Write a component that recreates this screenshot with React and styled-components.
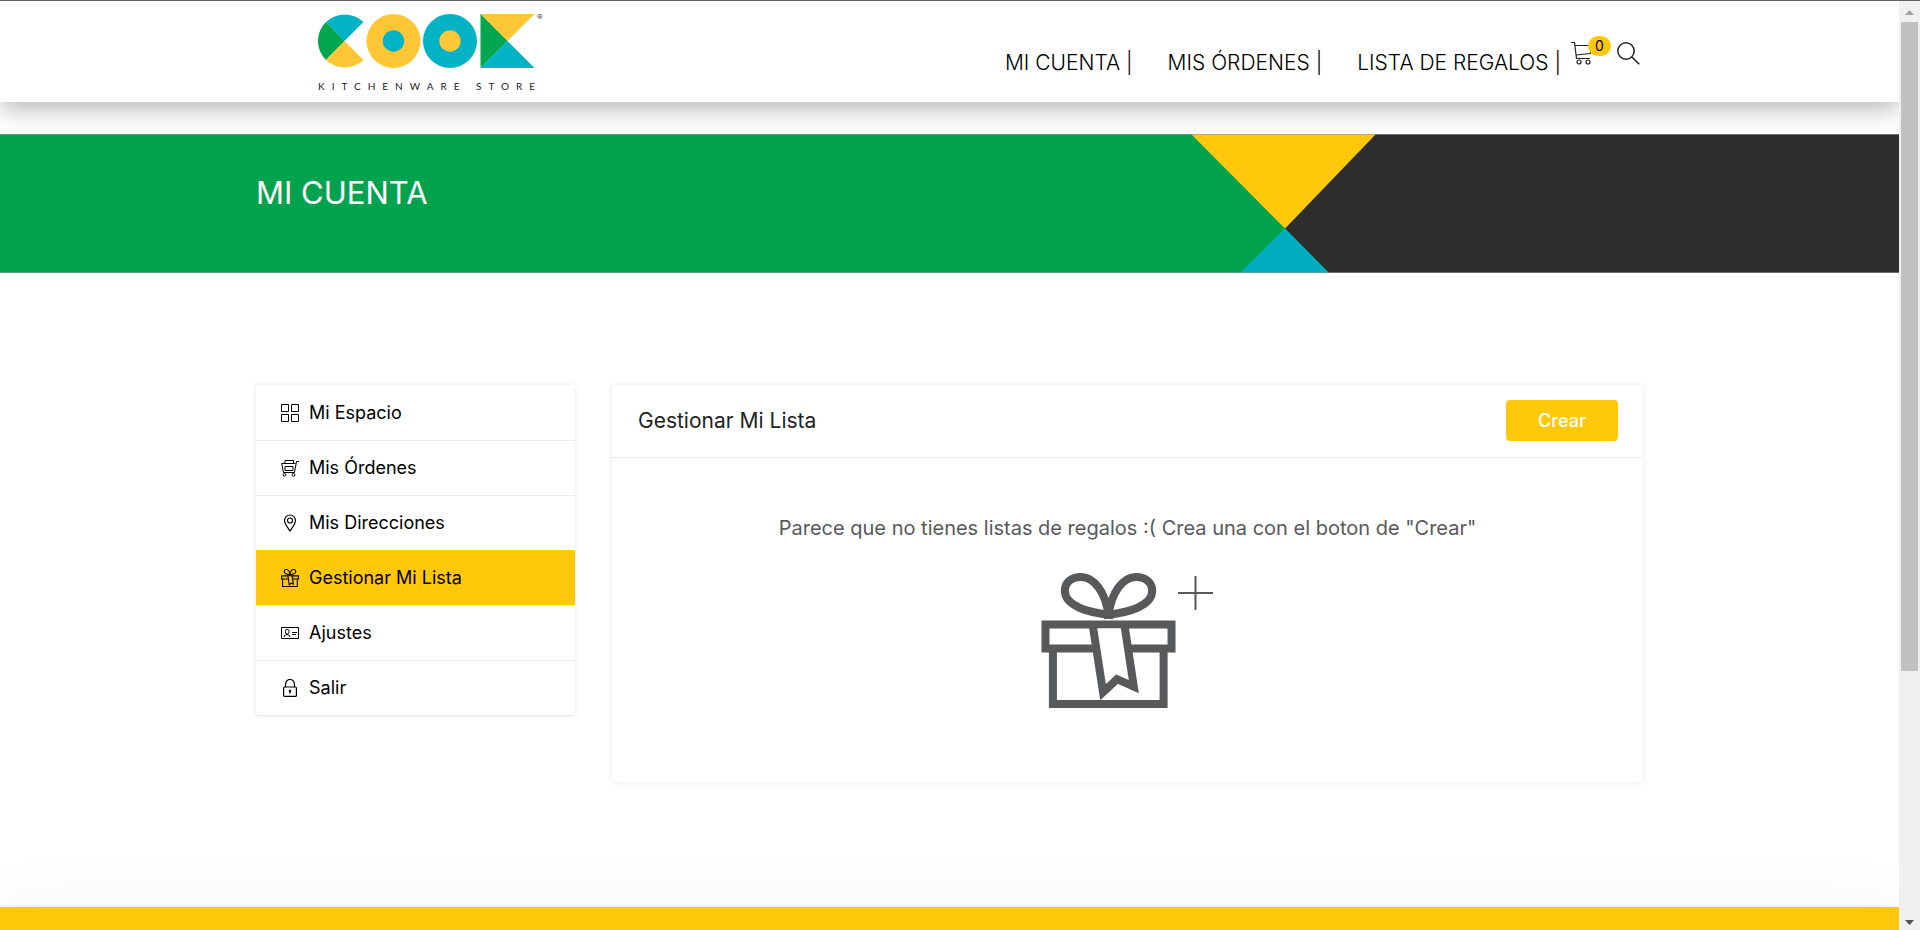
import React from "react";
import styled, { createGlobalStyle, css } from "styled-components";

const YELLOW = "#ffc80a";
const GREEN = "#02a24f";
const CYAN = "#02adc2";
const DARK = "#2d2d2d";

const GlobalStyle = createGlobalStyle`
  *, *::before, *::after { box-sizing: border-box; }
  body {
    margin: 0;
    background: #fff;
    color: #000;
    font-family: Inter, "Open Sans", sans-serif;
    font-size: 18px;
  }
  a { color: inherit; text-decoration: none; }
  h1, h2, p, ul { margin: 0; padding: 0; font-weight: 400; }
  ul { list-style: none; }
  svg { display: block; flex: none; }
`;

const Shell = styled.div`
  display: flex;
  min-height: 100vh;
  border-top: 1px solid #5f5d66;
`;

const Page = styled.div`
  flex: 1;
  min-width: 0;
  display: flex;
  flex-direction: column;
  overflow: hidden;
`;

const Container = styled.div`
  width: 100%;
  max-width: 1387px;
  margin: 0 auto;
`;

const Header = styled.header`
  height: 101px;
  background: #fff;
  box-shadow: 0 6px 24px rgba(0, 0, 0, 0.3);
`;

const HeaderRow = styled(Container)`
  display: flex;
  justify-content: space-between;
  padding: 8px 3px 0 62px;
`;

const Nav = styled.nav`
  display: flex;
  align-items: flex-start;
`;

const NavList = styled.ul`
  display: flex;
  gap: 35px;
  padding-top: 41px;
  font-size: 21px;
  font-weight: 300;
  line-height: 26px;
  white-space: nowrap;
`;

const NavTools = styled.div`
  display: flex;
  gap: 23px;
  padding: 32px 0 0 10px;
`;

const ToolButton = styled.button`
  position: relative;
  padding: 0;
  border: 0;
  background: none;
  color: #222;
  cursor: pointer;
`;

const Badge = styled.span`
  position: absolute;
  top: -5px;
  left: 17px;
  width: 23px;
  height: 20px;
  border-radius: 10px;
  background: ${YELLOW};
  color: #000;
  font: 14px/20px Inter, sans-serif;
  text-align: center;
`;

const Banner = styled.section`
  position: relative;
  height: 139px;
  margin-top: 32px;
  background: ${GREEN};
  overflow: hidden;

  &::after {
    content: "";
    position: absolute;
    inset: 0;
    border: solid rgba(150, 150, 150, 0.6);
    border-width: 1px 0;
    pointer-events: none;
  }
`;

const BannerArt = styled.svg`
  position: absolute;
  top: 0;
  right: 0;
`;

const BannerTitle = styled.h1`
  padding-top: 39px;
  color: #fff;
  font-size: 31px;
  line-height: 40px;
`;

const Account = styled(Container)`
  display: grid;
  grid-template-columns: 319px minmax(0, 1fr);
  gap: 37px;
  align-items: start;
  padding: 112px 0 125px;
`;

const card = css`
  background: #fff;
  box-shadow: 0 0 6px rgba(0, 0, 0, 0.09);
`;

const Menu = styled.ul`
  ${card}
  border-bottom: 1px solid #ececec;
`;

const MenuLink = styled.a`
  display: flex;
  align-items: center;
  gap: 10px;
  height: 55px;
  padding-left: 25px;
  border-top: 1px solid ${(p) => (p.$active ? YELLOW : "#ececec")};
  background: ${(p) => (p.$active ? YELLOW : "#fff")};
  font-size: 18px;
  line-height: 24px;

  li:first-child > & { border-top-color: #fff; }
`;

const Panel = styled.section`
  ${card}
`;

const PanelHeader = styled.div`
  display: flex;
  justify-content: space-between;
  padding: 15px 25px 16px 26px;
  border-bottom: 1px solid #ececec;
`;

const PanelTitle = styled.h2`
  color: #222;
  font-size: 21px;
  line-height: 41px;
`;

const CreateButton = styled.button`
  width: 112px;
  height: 41px;
  border: 0;
  border-radius: 4px;
  background: ${YELLOW};
  color: #fff;
  font: 500 18px/24px Inter, sans-serif;
  cursor: pointer;
`;

const Empty = styled.div`
  display: flex;
  flex-direction: column;
  align-items: center;
  gap: 32px;
  padding: 57px 0 74px;
  color: #58595b;
`;

const Message = styled.p`
  font-size: 20px;
  line-height: 26px;
`;

const EmptyArt = styled.div`
  display: flex;
  gap: 2px;
  padding-right: 2px;
`;

const Footer = styled.footer`
  flex: 1;
  min-height: 23px;
  background: ${YELLOW};
  box-shadow: 0 0 60px rgba(0, 0, 0, 0.08);
`;

const Rail = styled.div`
  width: 21px;
  flex: none;
  display: flex;
  flex-direction: column;
  align-items: center;
  justify-content: space-between;
  padding: 9px 0 5px;
  background: #f0f0f0;
`;

const RailTrack = styled.div`
  flex: 1;
  width: 17px;
  margin: 7px 0 9px;
`;

const RailThumb = styled.div`
  height: 73%;
  background: #c1c1c1;
`;

function Logo() {
  return (
    <svg width="240" height="86" viewBox="318 9 240 86" role="img" aria-label="Cook Kitchenware Store">
      <path d="M344.500 41 326 22A27 27 0 0 1 363.500 22Z" fill="#02b3c5" />
      <path d="M344.500 41 326 60A26.500 26.500 0 0 1 326 22Z" fill="#02a64f" />
      <path d="M344.500 41 363.500 60A27 27 0 0 1 326 60Z" fill="#ffc635" />
      <circle cx="393.500" cy="41" r="27" fill="#ffc635" />
      <circle cx="393.500" cy="41" r="10.700" fill="#02b3c5" />
      <circle cx="450" cy="41" r="27" fill="#02b3c5" />
      <circle cx="450" cy="41" r="10.700" fill="#ffc635" />
      <path d="M480.500 14H534.500L507.500 41Z" fill="#ffc635" />
      <path d="M480.500 14V68L507.500 41Z" fill="#02a64f" />
      <path d="M480.500 68H534.500L507.500 41Z" fill="#02b3c5" />
      <text x="537" y="20" fontFamily="Inter, sans-serif" fontSize="8" fill="#333">®</text>
      <text x="318" y="90" fontFamily="Lato, sans-serif" fontSize="10" fontWeight="400" letterSpacing="7" fill="#222">
        KITCHENWARE STORE
      </text>
    </svg>
  );
}

const line = { fill: "none", stroke: "currentColor" };

const CartIcon = () => (
  <svg width="23" height="24" viewBox="0 0 23 24" {...line} strokeWidth="1.200">
    <path d="M0 1.500H3.500L5.500 17.500H19M4 4.500H21L19.500 12.500 5 14" />
    <circle cx="8" cy="21" r="2" />
    <circle cx="17" cy="21" r="2" />
  </svg>
);

const SearchIcon = () => (
  <svg width="23" height="23" viewBox="0 0 23 23" {...line} strokeWidth="1.500">
    <circle cx="9" cy="9" r="8.200" />
    <path d="M14.800 15 22.300 22.300" />
  </svg>
);

const GridIcon = () => (
  <svg width="18" height="18" viewBox="0 0 18 18" {...line}>
    <path d="M.5.500h7v7h-7zM10.500.500h7v7h-7zM.5 10.500h7v7h-7zM10.500 10.500h7v7h-7z" />
  </svg>
);

const OrdersIcon = () => (
  <svg width="18" height="18" viewBox="0 0 18 18" {...line}>
    <path d="M18 2.500H15.500L13.500 13.500H2.500L.7 4.500H14.500M4 4V1.500H12.500V4M4 7.500h8v4H4z" />
    <circle cx="3.500" cy="15.800" r="1.400" />
    <circle cx="12.500" cy="15.800" r="1.400" />
  </svg>
);

const PinIcon = () => (
  <svg width="18" height="18" viewBox="0 0 18 18" {...line} strokeWidth="1.200">
    <path d="M9 17C6.500 13 3.500 9.800 3.500 6.500a5.500 5.500 0 0 1 11 0C14.500 9.800 11.500 13 9 17Z" />
    <circle cx="9" cy="6.500" r="2.500" />
  </svg>
);

const GiftIcon = ({ size = 18, stroke = 1.1 }) => (
  <svg width={size} height={size} viewBox="0 0 136 136" {...line} strokeWidth={stroke * (136 / size)}>
    <path d="M4.500 52H131.500V76H4.500ZM12 76V132H123.500V76" />
    <path d="M52 56 63 119 77 105 93 113 84 56Z" stroke="none" fill={size > 40 ? "#fff" : YELLOW} />
    <path d="M52 52 62.500 120 76.500 107 93.500 114.500 84 52" />
    <path d="M68 42C65 20 54 4 40 4 30 4 24 10 24 18 24 34 50 40 68 42ZM68 42C71 20 82 4 96 4 106 4 112 10 112 18 112 34 86 40 68 42Z" />
  </svg>
);

const CardIcon = () => (
  <svg width="18" height="18" viewBox="0 0 18 18" {...line}>
    <path d="M.5 3.500h17v11H.5zM3 13 3.500 11.500 6 10.500 8.500 11.500 9 13M11 8.500h5M11 10.500h4" />
    <ellipse cx="6.200" cy="7.700" rx="1.900" ry="2.400" />
  </svg>
);

const LockIcon = () => (
  <svg width="18" height="18" viewBox="0 0 18 18" {...line} strokeWidth="1.200">
    <rect x="2.600" y="8" width="12.800" height="9.400" rx="1" />
    <path d="M4.500 8V5.500a4.500 5 0 0 1 9 0V8M9 11.500V14.500" />
    <circle cx="9" cy="12" r=".6" />
  </svg>
);

const PlusIcon = () => (
  <svg width="35" height="38" viewBox="0 0 35 38" {...line} strokeWidth="2">
    <path d="M0 20H35M17.500 3V37" />
  </svg>
);

const navLinks = ["MI CUENTA |", "MIS ÓRDENES |", "LISTA DE REGALOS |"];

const menuItems = [
  { label: "Mi Espacio", Icon: GridIcon },
  { label: "Mis Órdenes", Icon: OrdersIcon },
  { label: "Mis Direcciones", Icon: PinIcon },
  { label: "Gestionar Mi Lista", Icon: GiftIcon, active: true },
  { label: "Ajustes", Icon: CardIcon },
  { label: "Salir", Icon: LockIcon },
];

export default function App() {
  return (
    <>
      <GlobalStyle />
      <Shell>
        <Page>
          <Header>
            <HeaderRow>
              <a href="#inicio"><Logo /></a>
              <Nav>
                <NavList>
                  {navLinks.map((label) => (
                    <li key={label}><a href="#nav">{label}</a></li>
                  ))}
                </NavList>
                <NavTools>
                  <ToolButton aria-label="Carrito">
                    <CartIcon />
                    <Badge>0</Badge>
                  </ToolButton>
                  <ToolButton aria-label="Buscar"><SearchIcon /></ToolButton>
                </NavTools>
              </Nav>
            </HeaderRow>
          </Header>

          <Banner>
            <BannerArt width="708" height="139" viewBox="1191 0 708 139" aria-hidden="true">
              <path d="M1375 0H1899V139H1329L1285 94.500Z" fill={DARK} />
              <path d="M1191 0H1376L1285 94.500Z" fill={YELLOW} />
              <path d="M1240 139H1329L1285 94.500Z" fill={CYAN} />
            </BannerArt>
            <Container>
              <BannerTitle>MI CUENTA</BannerTitle>
            </Container>
          </Banner>

          <Account as="main">
            <Menu>
              {menuItems.map(({ label, Icon, active }) => (
                <li key={label}>
                  <MenuLink href="#cuenta" $active={active} aria-current={active ? "page" : undefined}>
                    <Icon />
                    {label}
                  </MenuLink>
                </li>
              ))}
            </Menu>
            <Panel>
              <PanelHeader>
                <PanelTitle>Gestionar Mi Lista</PanelTitle>
                <CreateButton>Crear</CreateButton>
              </PanelHeader>
              <Empty>
                <Message>Parece que no tienes listas de regalos :( Crea una con el boton de "Crear"</Message>
                <EmptyArt>
                  <GiftIcon size={135} stroke={8} />
                  <PlusIcon />
                </EmptyArt>
              </Empty>
            </Panel>
          </Account>

          <Footer />
        </Page>
        <Rail aria-hidden="true">
          <svg width="9" height="5" viewBox="0 0 9 5"><path d="M0 5 4.500 0 9 5Z" fill="#a3a3a3" /></svg>
          <RailTrack><RailThumb /></RailTrack>
          <svg width="9" height="5" viewBox="0 0 9 5"><path d="M0 0H9L4.500 5Z" fill="#505050" /></svg>
        </Rail>
      </Shell>
    </>
  );
}
